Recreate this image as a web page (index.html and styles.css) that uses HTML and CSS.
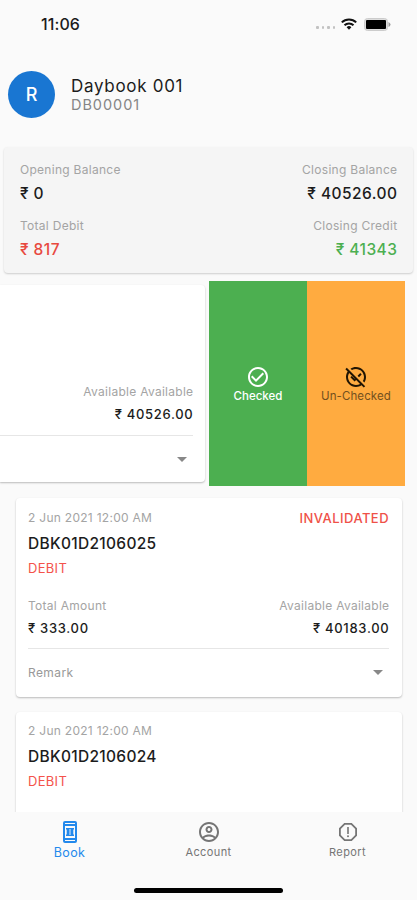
FILE: index.html
```html
<!DOCTYPE html>
<html lang="en">
<head>
<meta charset="utf-8">
<title>Daybook</title>
<link rel="stylesheet" href="styles.css">
</head>
<body>
<div class="app">
  <header class="status">
    <span class="time">11:06</span>
    <div class="signals">
      <div class="dots"><i></i><i></i><i></i><i></i></div>
      <svg class="wifi" viewBox="0 0 16 12"><g fill="none" stroke="#111" stroke-width="2"><path d="M.8 4.400a10.200 10.200 0 0 1 14.400 0"/><path d="M3.500 7.300a6.400 6.400 0 0 1 9 0"/></g><path d="M5.600 9.300a3.400 3.400 0 0 1 4.800 0L8 11.800z" fill="#111"/></svg>
      <svg class="battery" viewBox="0 0 27 13"><rect x=".5" y=".5" width="23" height="12" rx="3" fill="#ddd" stroke="#ccc"/><rect x="2" y="2" width="20" height="9" rx="1" fill="#000"/><path d="M24.500 4v5q2-1 2-2.500t-2-2.500z" fill="#999"/></svg>
    </div>
  </header>
  <section class="profile">
    <div class="avatar">R</div>
    <div>
      <div class="name">Daybook 001</div>
      <div class="code">DB00001</div>
    </div>
  </section>
  <section class="summary">
    <div><div class="label">Opening Balance</div><div class="value">₹ 0</div></div>
    <div class="end"><div class="label">Closing Balance</div><div class="value">₹ 40526.00</div></div>
    <div><div class="label">Total Debit</div><div class="value red">₹ 817</div></div>
    <div class="end"><div class="label">Closing Credit</div><div class="value green">₹ 41343</div></div>
  </section>
  <main class="list">
    <div class="swipe">
      <div class="swiped">
        <article class="card partial">
          <div class="amounts"><div class="end"><div class="label">Available Available</div><div class="amount">₹ 40526.00</div></div></div>
          <div class="remark"><span></span><b class="caret"></b></div>
        </article>
      </div>
      <div class="action checked">
        <svg viewBox="0 0 24 24"><path d="M16.590 7.580 10 14.170l-3.590-3.580L5 12l5 5 8-8zM12 2C6.480 2 2 6.480 2 12s4.480 10 10 10 10-4.480 10-10S17.520 2 12 2zm0 18c-4.420 0-8-3.580-8-8s3.580-8 8-8 8 3.580 8 8-3.580 8-8 8z"/></svg>
        <span>Checked</span>
      </div>
      <div class="action unchecked">
        <svg viewBox="0 0 24 24"><path d="M7.940 5.120 6.490 3.660C8.070 2.610 9.960 2 12 2c5.520 0 10 4.480 10 10 0 2.040-.61 3.930-1.660 5.510l-1.460-1.460C19.590 14.860 20 13.480 20 12c0-4.410-3.590-8-8-8-1.480 0-2.860.41-4.060 1.120zM17.660 9.530l-1.410-1.410-2.650 2.650 1.410 1.410zM19.780 22.610l-2.270-2.270C15.930 21.390 14.040 22 12 22 6.480 22 2 17.520 2 12c0-2.040.61-3.930 1.660-5.510L1.390 4.220 2.800 2.810l18.380 18.380zM16.060 18.880 12.180 15l-1.590 1.590-4.240-4.240 1.410-1.410 2.830 2.830.18-.18L5.120 7.940C4.410 9.140 4 10.520 4 12c0 4.410 3.590 8 8 8 1.480 0 2.860-.41 4.060-1.120z"/></svg>
        <span>Un-Checked</span>
      </div>
    </div>
    <article class="card">
      <div class="top"><span class="date">2 Jun 2021 12:00 AM</span><span class="state">INVALIDATED</span></div>
      <div class="ref">DBK01D2106025</div>
      <div class="type">DEBIT</div>
      <div class="amounts">
        <div><div class="label">Total Amount</div><div class="amount">₹ 333.00</div></div>
        <div class="end"><div class="label">Available Available</div><div class="amount">₹ 40183.00</div></div>
      </div>
      <div class="remark"><span>Remark</span><b class="caret"></b></div>
    </article>
    <article class="card last">
      <div class="top"><span class="date">2 Jun 2021 12:00 AM</span></div>
      <div class="ref">DBK01D2106024</div>
      <div class="type">DEBIT</div>
    </article>
  </main>
  <nav class="tabs">
    <div class="tab active">
      <svg viewBox="0 0 24 24"><path fill-rule="evenodd" d="M7 1h10a2 2 0 0 1 2 2v18a2 2 0 0 1-2 2H7a2 2 0 0 1-2-2V3a2 2 0 0 1 2-2zm0 2v1h10V3zm0 3v12h10V6zm0 14v1h10v-1z"/><path d="M8 8h8v1.500h-.7v5h.7V16H8v-1.500h.7v-5H8z"/><path d="M12 9v6" stroke="#fafafa" stroke-width=".9"/></svg>
      <span>Book</span>
    </div>
    <div class="tab">
      <svg viewBox="0 0 24 24"><path fill-rule="evenodd" d="M12 2C6.480 2 2 6.480 2 12s4.480 10 10 10 10-4.480 10-10S17.520 2 12 2zM7.070 18.280c.43-.9 3.050-1.780 4.930-1.780s4.510.88 4.930 1.780C15.570 19.360 13.860 20 12 20s-3.570-.64-4.930-1.720zm11.290-1.450c-1.430-1.740-4.900-2.330-6.360-2.330s-4.930.59-6.360 2.330C4.620 15.490 4 13.820 4 12c0-4.410 3.590-8 8-8s8 3.590 8 8c0 1.820-.62 3.490-1.640 4.830zM12 6c-1.940 0-3.500 1.560-3.500 3.500S10.060 13 12 13s3.500-1.560 3.500-3.500S13.940 6 12 6zm0 5c-.83 0-1.500-.67-1.500-1.500S11.170 8 12 8s1.500.67 1.500 1.500S12.830 11 12 11z"/></svg>
      <span>Account</span>
    </div>
    <div class="tab">
      <svg viewBox="0 0 24 24"><path fill-rule="evenodd" d="M15.730 3H8.270L3 8.270v7.460L8.270 21h7.460L21 15.730V8.270zM19.200 15 15 19.200H9L4.800 15V9L9 4.800h6L19.200 9z"/><circle cx="12" cy="16.200" r="1"/><path d="M11.200 7h1.600v7h-1.600z"/></svg>
      <span>Report</span>
    </div>
  </nav>
  <div class="home"></div>
</div>
</body>
</html>
```
FILE: styles.css
```css
* { box-sizing: border-box; }
body { margin: 0; background: #fafafa; font-family: Inter, "Noto Sans", sans-serif; color: #1c1c1c; }
.app { width: 417px; height: 900px; display: flex; flex-direction: column; overflow: hidden; white-space: nowrap; }
.status { height: 48px; flex: none; display: flex; justify-content: space-between; padding: 0 26px 0 41px; }
.time { font-size: 16px; line-height: 49px; font-weight: 500; letter-spacing: .1px; }
.signals { display: flex; align-items: center; }
.dots { display: flex; gap: 3px; margin: 7px 6px 0 0; }
.dots i { width: 2.500px; height: 2.500px; background: #c2c2c2; border-radius: 1px; }
.wifi { width: 16px; height: 12px; margin-right: 7px; }
.battery { width: 27px; height: 13px; }
.profile { height: 99px; flex: none; display: flex; gap: 16px; padding: 23px 8px 0; }
.avatar { width: 47px; height: 47px; border-radius: 50%; background: #1976d2; color: #fff; font-size: 18px; font-weight: 500; line-height: 48px; text-align: center; }
.name { font-size: 17px; line-height: 22px; margin-top: 4px; letter-spacing: .7px; }
.code { font-size: 14.500px; line-height: 16px; letter-spacing: .95px; color: #858585; }
.summary { height: 126px; flex: none; margin: 0 4px; padding: 12px 16px 0; background: #f5f5f5; border-radius: 4px; box-shadow: 0 1px 2px rgba(0,0,0,.18); display: grid; grid-template-columns: 1fr 1fr; grid-template-rows: 56px 48px; }
.label, .date { font-size: 12px; line-height: 22px; letter-spacing: .28px; color: #a4a4a4; }
.value { font-size: 15.500px; line-height: 25px; font-weight: 450; letter-spacing: .45px; }
.end { text-align: right; }
.end > div { margin-right: -.4px; }
.red { color: #e8493f; }
.green { color: #4caf50; }
.list { height: 539px; flex: none; padding-top: 8px; overflow: hidden; }
.swipe { height: 205px; display: flex; margin-bottom: 12px; }
.swiped { width: 209px; padding: 4px 4px 4px 0; }
.card { height: 199px; margin: 0 15px 15px 16px; padding: 9px 13px 0 12px; background: #fff; border-radius: 4px; box-shadow: 0 1px 2px rgba(0,0,0,.26); }
.last { padding-top: 8px; }
.swiped .card { height: 197px; margin: 0; padding: 85px 12px 0 0; border-radius: 0 4px 4px 0; }
.action { width: 98px; display: flex; flex-direction: column; align-items: center; padding-top: 84px; font-size: 11.500px; line-height: 14px; letter-spacing: 0; }
.action svg { width: 24px; height: 24px; fill: currentColor; }
.checked { background: #4caf50; color: #fff; font-weight: 500; }
.unchecked { background: #ffab40; color: #211503; }
.unchecked span { color: #73501e; letter-spacing: .1px; }
.top { display: flex; justify-content: space-between; }
.state { font-size: 13px; line-height: 22px; font-weight: 450; letter-spacing: .45px; color: #ef5148; }
.ref { font-size: 15.500px; line-height: 29px; font-weight: 450; letter-spacing: .3px; }
.type { font-size: 13px; line-height: 21px; letter-spacing: .3px; color: #f4534b; }
.amounts { height: 70px; padding-top: 16px; display: flex; justify-content: space-between; border-bottom: 1px solid #e6e6e6; }
.partial .amounts { justify-content: flex-end; height: 66px; padding-top: 11px; }
.amount { font-size: 13px; line-height: 22px; font-weight: 500; letter-spacing: .7px; }
.remark { height: 47px; display: flex; align-items: center; justify-content: space-between; padding-right: 6px; font-size: 12px; letter-spacing: .4px; color: #999; }
.caret { border: 5px solid transparent; border-top-color: #888; border-bottom: 0; }
.tabs { height: 74px; flex: none; display: grid; grid-template-columns: repeat(3, 1fr); }
.tab { display: flex; flex-direction: column; align-items: center; padding-top: 8px; color: #757575; font-size: 11px; line-height: 17px; letter-spacing: .4px; }
.tab svg { width: 24px; height: 24px; fill: currentColor; }
.active { color: #2389ec; font-size: 12.500px; }
.home { width: 149px; height: 5px; margin: 2px auto 0; background: #000; border-radius: 3px; }
```
